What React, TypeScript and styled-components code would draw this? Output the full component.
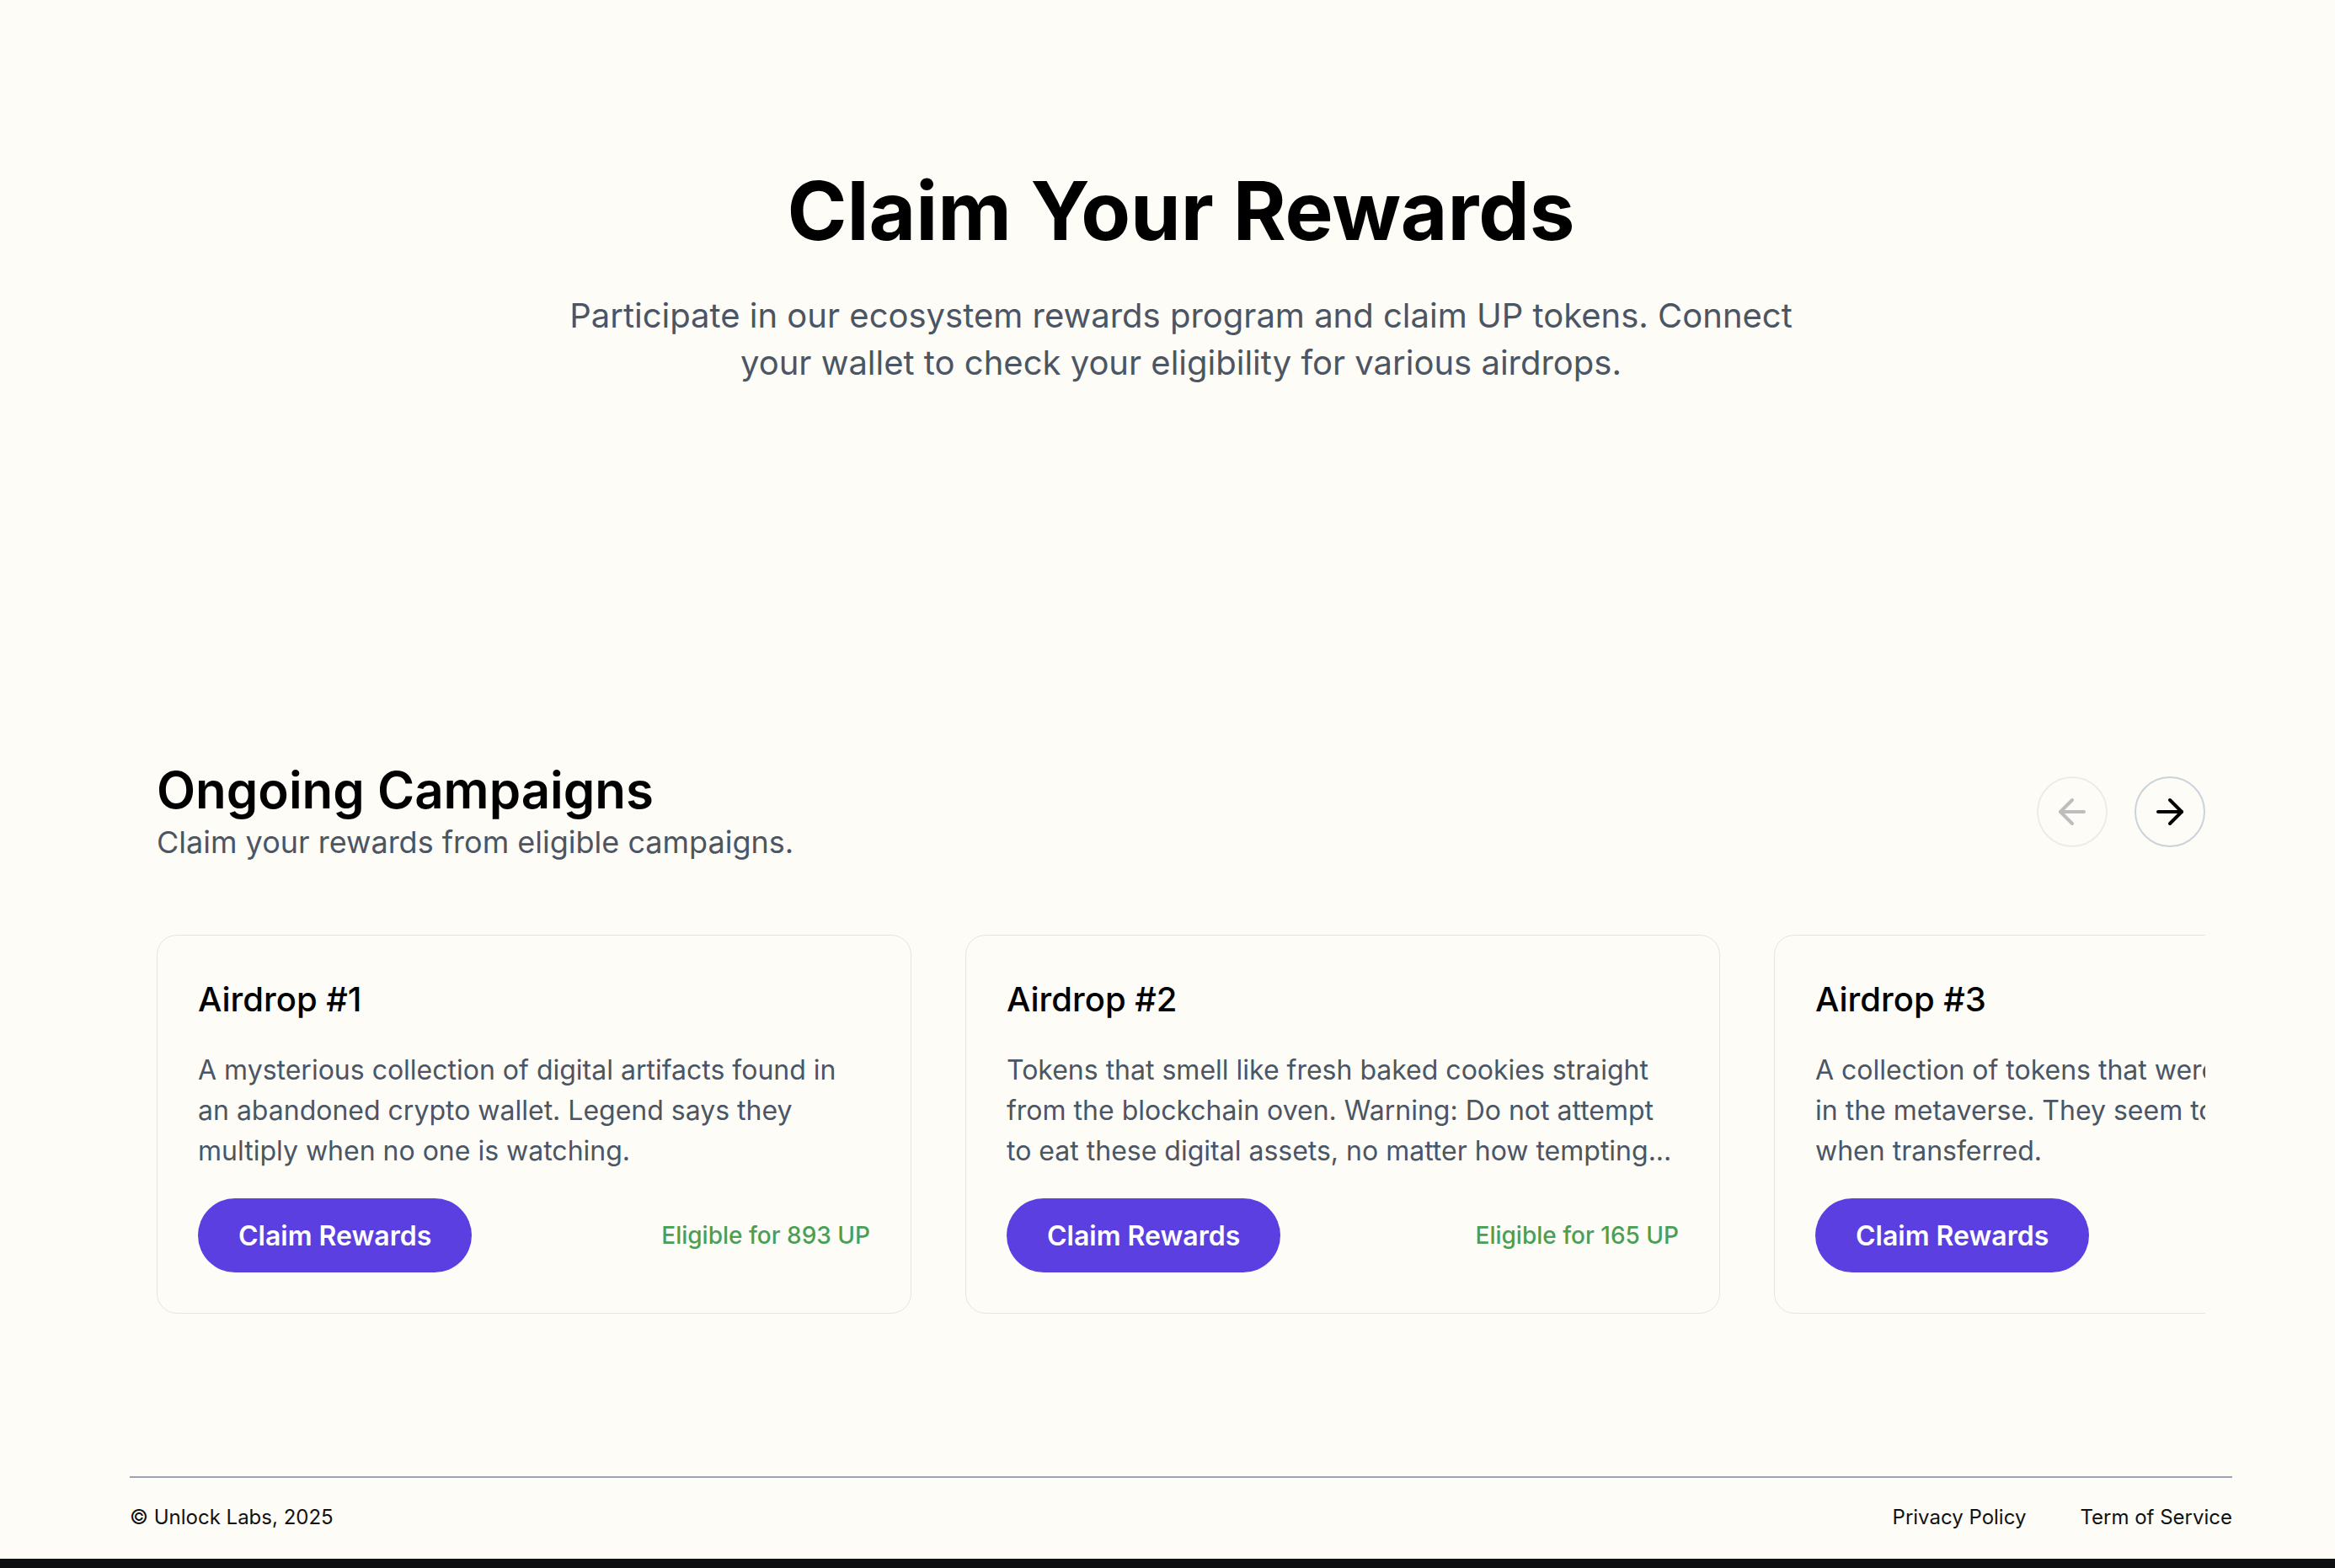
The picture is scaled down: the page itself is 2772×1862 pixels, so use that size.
import React from "react";
import styled, { createGlobalStyle } from "styled-components";
import { ArrowLeft, ArrowRight } from "lucide-react";

const Global = createGlobalStyle`
  * { box-sizing: border-box; }
  html, body { margin: 0; padding: 0; }
  body {
    background: #fdfcf7;
    font-family: Inter, "Noto Sans", sans-serif;
    color: #0a0a0a;
    overflow-x: hidden;
  }
`;

const Page = styled.div`
  padding-left: 32px;
  display: flex;
  flex-direction: column;
  align-items: center;
`;

const Container = styled.div`
  width: 2496px;
  display: flex;
  flex-direction: column;
`;

const Hero = styled.section`
  padding-top: 202px;
  display: flex;
  flex-direction: column;
  align-items: center;
  text-align: center;
`;

const HeroTitle = styled.h1`
  margin: 0;
  font-size: 96px;
  line-height: 96px;
  font-weight: 700;
  color: #000;
`;

const HeroText = styled.p`
  margin: 49px 0 0;
  max-width: 1536px;
  font-size: 40px;
  line-height: 56px;
  color: #4b5563;
`;

const Campaigns = styled.section`
  margin-top: 439px;
  padding: 0 32px;
  display: flex;
  flex-direction: column;
`;

const Header = styled.div`
  display: flex;
  align-items: center;
  justify-content: space-between;
`;

const HeaderText = styled.div`
  display: flex;
  flex-direction: column;
`;

const SectionTitle = styled.h2`
  margin: 0;
  font-size: 60px;
  line-height: 80px;
  font-weight: 600;
  color: #000;
`;

const SectionText = styled.p`
  margin: 0;
  font-size: 36px;
  line-height: 44px;
  color: #4b5563;
`;

const NavGroup = styled.div`
  display: flex;
  gap: 32px;
  margin-top: 8px;
`;

const NavButton = styled.button<{ $disabled?: boolean }>`
  width: 84px;
  height: 84px;
  border-radius: 50%;
  border: 2px solid ${(p) => (p.$disabled ? "#ececec" : "#cbd2dc")};
  background: transparent;
  display: flex;
  align-items: center;
  justify-content: center;
  padding: 0;
  color: ${(p) => (p.$disabled ? "#bdbdbd" : "#000")};
  cursor: pointer;
`;

const Viewport = styled.div`
  margin-top: 88px;
  overflow: hidden;
`;

const Track = styled.div`
  display: flex;
  gap: 64px;
`;

const Card = styled.article`
  flex: 0 0 896px;
  border: 1px solid #e4e5e7;
  border-radius: 24px;
  padding: 48px;
  display: flex;
  flex-direction: column;
  gap: 32px;
`;

const CardTitle = styled.h3`
  margin: 0;
  font-size: 40px;
  line-height: 56px;
  font-weight: 500;
  color: #000;
`;

const CardText = styled.p`
  margin: 0;
  font-size: 32px;
  line-height: 48px;
  color: #4b5563;
  height: 144px;
`;

const CardFooter = styled.div`
  display: flex;
  align-items: center;
  justify-content: space-between;
`;

const ClaimButton = styled.button`
  height: 88px;
  padding: 0 48px;
  border: none;
  border-radius: 9999px;
  background: #5b3fe0;
  color: #fff;
  font-family: Inter, "Noto Sans", sans-serif;
  font-size: 32px;
  font-weight: 600;
  cursor: pointer;
`;

const Eligible = styled.span`
  font-size: 28px;
  font-weight: 500;
  color: #4a9f55;
`;

const Footer = styled.footer`
  margin-top: 193px;
  border-top: 2px solid #9aa3b5;
  padding: 31px 0 33px;
  display: flex;
  justify-content: space-between;
  align-items: center;
  font-size: 24px;
  line-height: 32px;
  color: #111;
`;

const FooterLinks = styled.nav`
  display: flex;
  gap: 64px;
`;

const FooterLink = styled.a`
  color: #111;
  text-decoration: none;
`;

const DarkBand = styled.div`
  width: 100vw;
  height: 400px;
  background: #0e0f11;
  margin-left: -32px;
  align-self: flex-start;
`;

const campaigns = [
  {
    title: "Airdrop #1",
    text: "A mysterious collection of digital artifacts found in an abandoned crypto wallet. Legend says they multiply when no one is watching.",
    amount: "893",
  },
  {
    title: "Airdrop #2",
    text: "Tokens that smell like fresh baked cookies straight from the blockchain oven. Warning: Do not attempt to eat these digital assets, no matter how tempting...",
    amount: "165",
  },
  {
    title: "Airdrop #3",
    text: "A collection of tokens that were discovered drifting in the metaverse. They seem to glow mysteriously when transferred.",
    amount: "",
  },
];

export default function App() {
  return (
    <>
      <Global />
      <Page>
        <Container>
          <Hero>
            <HeroTitle>Claim Your Rewards</HeroTitle>
            <HeroText>
              Participate in our ecosystem rewards program and claim UP tokens. Connect your wallet to check your
              eligibility for various airdrops.
            </HeroText>
          </Hero>
          <Campaigns>
            <Header>
              <HeaderText>
                <SectionTitle>Ongoing Campaigns</SectionTitle>
                <SectionText>Claim your rewards from eligible campaigns.</SectionText>
              </HeaderText>
              <NavGroup>
                <NavButton $disabled aria-label="Previous">
                  <ArrowLeft size={48} strokeWidth={2} />
                </NavButton>
                <NavButton aria-label="Next">
                  <ArrowRight size={48} strokeWidth={2} />
                </NavButton>
              </NavGroup>
            </Header>
            <Viewport>
              <Track>
                {campaigns.map((c) => (
                  <Card key={c.title}>
                    <CardTitle>{c.title}</CardTitle>
                    <CardText>{c.text}</CardText>
                    <CardFooter>
                      <ClaimButton>Claim Rewards</ClaimButton>
                      {c.amount && <Eligible>Eligible for {c.amount} UP</Eligible>}
                    </CardFooter>
                  </Card>
                ))}
              </Track>
            </Viewport>
          </Campaigns>
          <Footer>
            <span>© Unlock Labs, 2025</span>
            <FooterLinks>
              <FooterLink href="#">Privacy Policy</FooterLink>
              <FooterLink href="#">Term of Service</FooterLink>
            </FooterLinks>
          </Footer>
        </Container>
        <DarkBand />
      </Page>
    </>
  );
}
